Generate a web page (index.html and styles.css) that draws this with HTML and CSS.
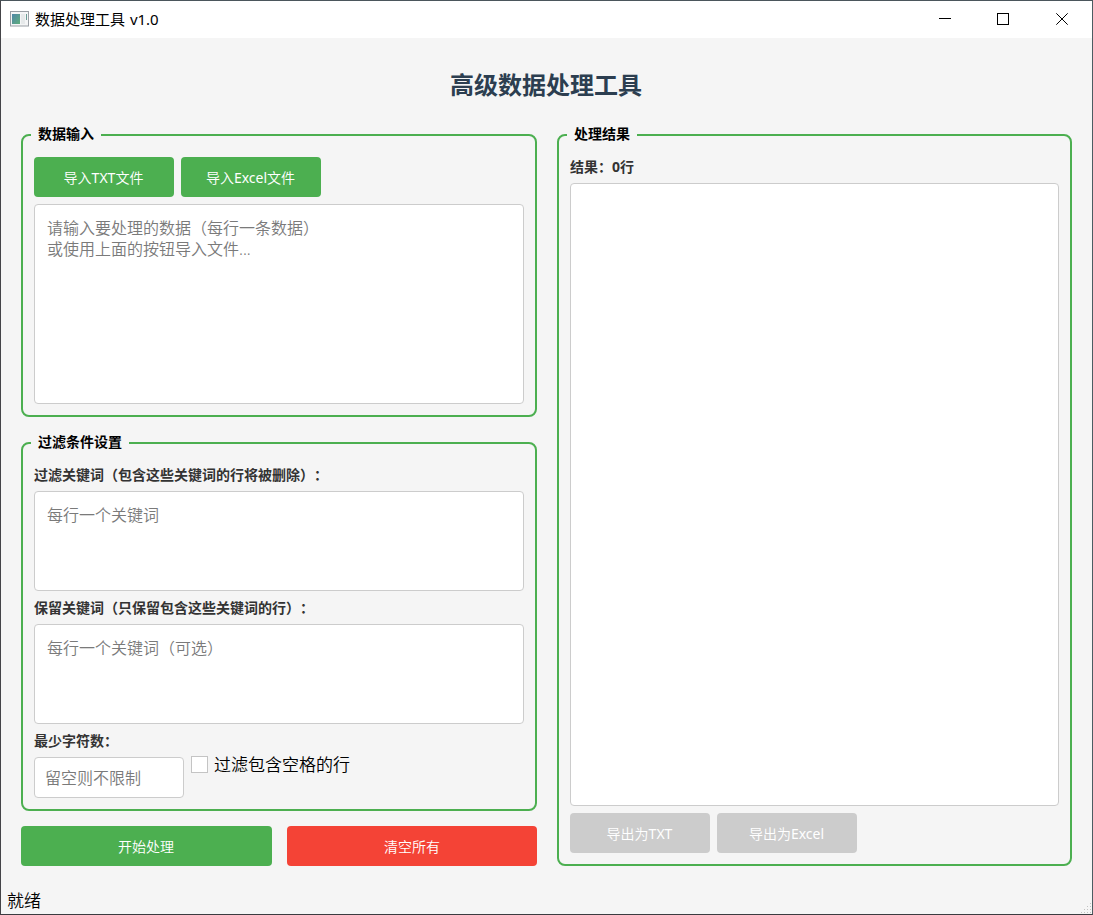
FILE: index.html
```html
<!DOCTYPE html>
<html lang="zh-CN">
<head>
<meta charset="utf-8">
<title>数据处理工具 v1.0</title>
<link rel="stylesheet" href="styles.css">
</head>
<body>
<div class="window">
  <header class="titlebar">
    <svg class="app-icon" width="19" height="16" viewBox="0 0 19 16">
      <defs><linearGradient id="pane" x1="0" y1="0" x2="1" y2="1"><stop offset="0" stop-color="#4f86a8"/><stop offset="1" stop-color="#5fae7c"/></linearGradient></defs>
      <rect x="0.5" y="0.5" width="18" height="14.5" fill="#f4f5f6" stroke="#9a9fa5"/>
      <rect x="2" y="3" width="8" height="10" fill="url(#pane)"/>
      <rect x="11" y="3" width="4" height="10" fill="#e6e9ea"/>
      <rect x="16" y="3" width="1" height="6" fill="#6a9c95"/>
    </svg>
    <span class="caption">数据处理工具 v1.0</span>
    <div class="controls">
      <svg width="12" height="12" viewBox="0 0 12 12"><path d="M0 5.5H12"/></svg>
      <svg width="12" height="12" viewBox="0 0 12 12"><path d="M.5 .5H11.5V11.5H.5Z"/></svg>
      <svg class="close" width="12" height="12" viewBox="0 0 12 12"><path d="M.3 .3L11.7 11.7M11.7 .3L.3 11.7"/></svg>
    </div>
  </header>
  <main class="content">
    <h1 class="heading">高级数据处理工具</h1>
    <div class="columns">
      <div class="left">
        <section class="group">
          <h2 class="legend">数据输入</h2>
          <div class="row">
            <button class="btn fixed">导入<span class="latin">TXT</span>文件</button>
            <button class="btn fixed">导入<span class="latin">Excel</span>文件</button>
          </div>
          <textarea class="box input-data" placeholder="请输入要处理的数据（每行一条数据）&#10;或使用上面的按钮导入文件..."></textarea>
        </section>
        <section class="group">
          <h2 class="legend">过滤条件设置</h2>
          <label class="label">过滤关键词（包含这些关键词的行将被删除）：</label>
          <textarea class="box keywords" placeholder="每行一个关键词"></textarea>
          <label class="label">保留关键词（只保留包含这些关键词的行）：</label>
          <textarea class="box keywords" placeholder="每行一个关键词（可选）"></textarea>
          <label class="label">最少字符数：</label>
          <div class="row options">
            <input class="box min-chars" type="text" placeholder="留空则不限制">
            <label class="check"><input type="checkbox">过滤包含空格的行</label>
          </div>
        </section>
        <div class="actions">
          <button class="btn start">开始处理</button>
          <button class="btn danger">清空所有</button>
        </div>
      </div>
      <section class="group results">
        <h2 class="legend">处理结果</h2>
        <label class="label">结果：0行</label>
        <textarea class="box output" readonly></textarea>
        <div class="row">
          <button class="btn fixed" disabled>导出为<span class="latin">TXT</span></button>
          <button class="btn fixed" disabled>导出为<span class="latin">Excel</span></button>
        </div>
      </section>
    </div>
  </main>
  <footer class="status">
    <span>就绪</span>
    <svg width="12" height="12" viewBox="0 0 12 12" fill="#c2c2c2"><path d="M10 1h1v1h-1zM7 4h1v1h-1zM10 4h1v1h-1zM4 7h1v1h-1zM7 7h1v1h-1zM10 7h1v1h-1zM1 10h1v1h-1zM4 10h1v1h-1zM7 10h1v1h-1zM10 10h1v1h-1z"/></svg>
  </footer>
</div>
</body>
</html>
```
FILE: styles.css
```css
* { box-sizing: border-box; }

body {
  margin: 0;
  font-family: "Noto Sans", "Noto Sans CJK SC", sans-serif;
  font-weight: 400;
  text-spacing-trim: space-all;
  color: #000;
}

button, input, textarea {
  font-family: inherit;
  font-weight: 350;
  margin: 0;
}

.window {
  display: flex;
  flex-direction: column;
  width: 1093px;
  height: 915px;
  border: 1px solid;
  border-color: #4b565c #4c5c62 #3b3b40 #444448;
  background: #f5f5f5;
  overflow: hidden;
}

.titlebar {
  display: flex;
  align-items: center;
  height: 37px;
  flex: none;
  padding: 0 24px 2px 9px;
  background: #fff;
}

.app-icon { margin-right: 6px; }
.caption { font-size: 15px; line-height: 20px; word-spacing: 1px; font-weight: 400; }

.controls { display: flex; gap: 46px; margin-left: auto; }
.controls svg { fill: none; stroke: #000; stroke-width: 1; shape-rendering: crispEdges; }
.controls .close { margin-left: 1px; shape-rendering: auto; }

.content { padding: 20px 20px 0; }

.heading {
  margin: 0;
  height: 76px;
  padding-right: 1px;
  font-size: 24px;
  line-height: 53px;
  font-weight: 700;
  text-align: center;
  color: #2c3e50;
}

.columns { display: grid; grid-template-columns: 516px 515px; gap: 20px; height: 732px; }
.left { display: flex; flex-direction: column; }

.group {
  position: relative;
  display: flex;
  flex-direction: column;
  gap: 7px;
  padding: 21px 11px 11px;
  border: 2px solid #4caf50;
  border-radius: 8px;
}

.left .group { margin-bottom: 25px; }
.left .group + .group { margin-bottom: 15px; }

.legend {
  position: absolute;
  top: -12px;
  left: 8px;
  margin: 0;
  padding: 0 7px;
  font-size: 14px;
  line-height: 20px;
  font-weight: 700;
  background: #f5f5f5;
}

.row { display: flex; gap: 7px; }

.btn {
  height: 40px;
  padding: 1px 1px 0 0;
  border: 0;
  border-radius: 4px;
  background: #4caf50;
  color: #fff;
  font-size: 14px;
  line-height: 20px;
}

.btn.fixed { width: 140px; }
.btn.danger { padding-right: 0; background: #f44336; }
.btn:disabled { background: #ccc; color: #fff; }
.latin { font-weight: 400; }

.label {
  height: 19px;
  font-size: 14px;
  line-height: 19px;
  font-weight: 700;
  color: #333;
}

.box {
  display: block;
  width: 100%;
  padding: 13px 12px;
  border: 1px solid #ccc;
  border-radius: 4px;
  background: #fff;
  font-size: 16px;
  line-height: 21px;
  resize: none;
  outline: 0;
}

.box::placeholder { color: #7a7a7a; opacity: 1; }

.input-data { height: 200px; }
.keywords { height: 100px; }
.output { flex: 1; }
.min-chars { width: 150px; height: 41px; padding: 0 10px; }

.options { align-items: flex-start; }
.check { display: flex; align-items: center; height: 17px; margin-top: -1px; font-size: 17px; line-height: 20px; font-weight: 350; }

.check input {
  appearance: none;
  width: 17px;
  height: 17px;
  margin-right: 6px;
  border: 1px solid #c4c4c4;
  background: #fff;
}

.actions { display: grid; grid-template-columns: 251px 250px; gap: 15px; }

.status {
  display: flex;
  align-items: flex-end;
  justify-content: space-between;
  flex: 1;
  padding-left: 6px;
  font-size: 17px;
  line-height: 27px;
  font-weight: 350;
}
```
